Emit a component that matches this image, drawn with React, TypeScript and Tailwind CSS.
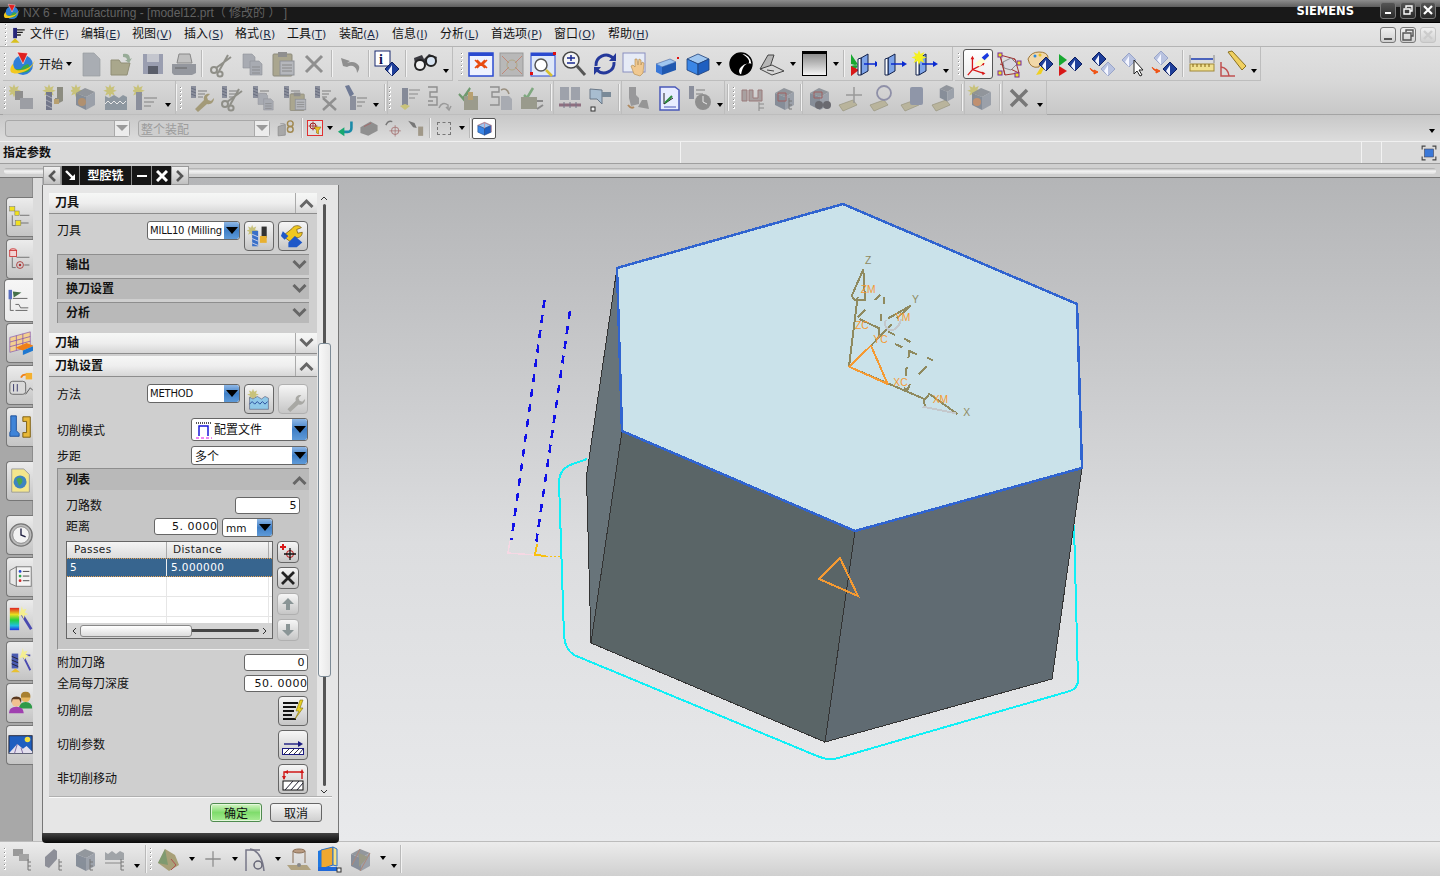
import React from "react";

const I = ({ s = 28, children }: { s?: number; children: React.ReactNode }) => (
  <svg width={s} height={s} viewBox="0 0 28 28" className="shrink-0">
    {children}
  </svg>
);

// ---- shared drawing bits ----
const Logo = () => (
  <>
    <circle cx="14" cy="15" r="10" fill="#2f7fd8" />
    <path d="M6 19q6 6 14 2q2-4-1-7q-5 1-7 5z" fill="#3aa84a" />
    <path d="M2 22C6 26 24 22 26 9c0 0-2 10-14 11C8 21 5 20 4 14 1 17 1 20 2 22z" fill="#f2c81e" />
    <path d="M8 2l11 1-5 11z" fill="#e02020" stroke="#fff" strokeWidth=".6" />
  </>
);
const Doc = ({ c = "#a9adb3" }: { c?: string }) => (
  <path d="M6 3h11l6 6v17H6z" fill={c} stroke="#9a9da2" strokeWidth=".7" />
);
const Mill = () => (
  <g>
    <rect x="4" y="2" width="5" height="12" fill="#8b8f9c" />
    <path d="M4 4l5 2M4 7l5 2M4 10l5 2" stroke="#6a6f80" />
    <path d="M11 7h9M11 10h7M11 13h5" stroke="#9b9b9b" strokeWidth="1.4" />
  </g>
);
const Spark = ({ x = 5, y = 5 }: { x?: number; y?: number }) => (
  <path
    d={`M${x} ${y - 5}l1.3 3.5 3.5-1.5-1.5 3.5 3.5 1.3-3.5 1.3 1.5 3.5-3.5-1.5-1.3 3.5-1.3-3.5-3.5 1.5 1.5-3.5-3.5-1.3 3.5-1.3-1.5-3.5 3.5 1.5z`}
    fill="#c8c27a"
  />
);
const Wrench = ({ c = "#a39a78" }: { c?: string }) => (
  <path d="M8 25l9-9c-1-4 2-7 6-6l-3 3 1 3 3 1 3-3c0 4-3 7-7 6l-9 8z" fill={c} />
);
const Scissors = ({ c = "#8f8f88" }: { c?: string }) => (
  <g fill="none" stroke={c} strokeWidth="2">
    <circle cx="7" cy="20" r="3" />
    <circle cx="13" cy="24" r="2.6" />
    <path d="M9 18L24 7M12 21L21 5" />
  </g>
);
const Pages = () => (
  <g fill="#a8abb2" stroke="#8f9298" strokeWidth=".6">
    <path d="M5 4h9l3 3v11H5z" />
    <path d="M12 11h9l3 3v11H12z" />
    <path d="M14 17h8M14 20h8M14 23h8" stroke="#777" />
  </g>
);
const Paste = () => (
  <g>
    <rect x="4" y="4" width="19" height="22" rx="1" fill="#aaa68f" stroke="#8d8b7c" />
    <rect x="9" y="2" width="9" height="5" fill="#8f8f8f" />
    <rect x="11" y="11" width="14" height="14" fill="#b5b7bc" stroke="#8f9298" />
    <path d="M13 15h10M13 18h10M13 21h10" stroke="#888" />
  </g>
);
const Cross = ({ c = "#8f8f8f", w = 3 }: { c?: string; w?: number }) => (
  <path d="M6 6l16 16M22 6L6 22" stroke={c} strokeWidth={w} />
);
const Box = ({ a = "#9fc6f0", b = "#3a86e6", c = "#1f5fc0" }: { a?: string; b?: string; c?: string }) => (
  <g stroke="#1d3f78" strokeWidth=".8">
    <path d="M3 9l11-5 11 5-11 5z" fill={a} />
    <path d="M3 9l11 5v11L3 20z" fill={b} />
    <path d="M25 9l-11 5v11l11-5z" fill={c} />
  </g>
);
const GrayBox = () => (
  <g opacity=".9">
    <path d="M5 9l9-5 10 4-9 5z" fill="#8a8f96" />
    <path d="M5 9l10 4v13L5 21z" fill="#7f8793" />
    <path d="M24 8l-9 5v13l9-5z" fill="#969ca6" />
  </g>
);
const Panel = ({ x = 10 }: { x?: number }) => (
  <g>
    <path d={`M${x} 8l7-4v17l-7 4z`} fill="#7ea4e8" stroke="#10204a" />
    <path d={`M${x} 8v17h-3V9z`} fill="#fff" stroke="#10204a" />
    <path d={`M${x + 3} 14h11`} stroke="#0a2ad0" strokeWidth="1.5" />
    <path d={`M${x + 14} 11l5 3-5 3z`} fill="#0a2ad0" />
  </g>
);
const Diamond = ({ x = 14, y = 14, dim = false }: { x?: number; y?: number; dim?: boolean }) => (
  <g>
    <path d={`M${x} ${y - 7}l7 7-7 7-7-7z`} fill={dim ? "#b8c2e0" : "#1f3f9a"} stroke={dim ? "#98a4c8" : "#0d1f60"} />
    <path d={`M${x} ${y - 4}v11l-4-5z`} fill="#f4f6ff" />
  </g>
);
const Tag = () => (
  <path d="M3 21l14-5 4 5-14 6z" fill="#b9b49c" stroke="#989580" strokeWidth=".7" />
);
const TreeMark = () => (
  <path d="M19 14v11M19 17h3M19 21h3M19 25h3" stroke="#777" fill="none" />
);
const Caret = ({ low = false, dim = false }: { low?: boolean; dim?: boolean }) => (
  <div className={`flex justify-center shrink-0 w-full ${low ? "pt-[14px]" : ""}`}>
    <div
      className={`w-0 h-0 border-l-[3px] border-r-[3px] border-t-[4px] border-l-transparent border-r-transparent ${dim ? "border-t-[#666]" : "border-t-black"}`}
    />
  </div>
);

const Ic = ({ children, w = "w-[31px]" }: { children: React.ReactNode; w?: string }) => (
  <div className={`${w} flex justify-center items-center shrink-0`}>{children}</div>
);
const Sep = ({ w = "w-[6px]" }: { w?: string }) => (
  <div className={`${w} self-stretch flex justify-center py-[3px] shrink-0`}>
    <div className="w-[2px] bg-[#f2f2f2] border-l border-[#b9b9b9]" />
  </div>
);
const Grip = ({ w = "w-[4px]" }: { w?: string }) => (
  <div className={`${w} flex flex-col gap-[2px] justify-center items-center shrink-0`}>
    {[0, 1, 2, 3, 4, 5].map((n) => (
      <div key={n} className="w-[2px] h-[2px] bg-[#8c8c8c] border-r border-b border-white" />
    ))}
  </div>
);
const Cw = ({ w, low }: { w: string; low?: boolean }) => (
  <div className={`${w} shrink-0`}>
    <Caret low={low} />
  </div>
);
const Tb = ({ w, children }: { w: string; children: React.ReactNode }) => (
  <div className={`${w} h-[34px] flex items-center shrink-0 border-r border-b border-[#bdbdbd]`}>{children}</div>
);

const menu: [string, string, string][] = [
  ["文件", "F", "w-[51px]"],
  ["编辑", "E", "w-[51px]"],
  ["视图", "V", "w-[52px]"],
  ["插入", "S", "w-[51px]"],
  ["格式", "R", "w-[52px]"],
  ["工具", "T", "w-[52px]"],
  ["装配", "A", "w-[53px]"],
  ["信息", "I", "w-[48px]"],
  ["分析", "L", "w-[51px]"],
  ["首选项", "P", "w-[63px]"],
  ["窗口", "O", "w-[54px]"],
  ["帮助", "H", "w-[51px]"],
];

const WinBtn = ({ children }: { children: React.ReactNode }) => (
  <div className="w-[16px] h-[17px] rounded-[3px] border border-[#777] bg-gradient-to-b from-[#555] to-[#2a2a2a] flex items-center justify-center text-white">
    {children}
  </div>
);
const MdiBtn = ({ children, dim }: { children: React.ReactNode; dim?: boolean }) => (
  <div
    className={`w-[16px] h-[16px] rounded-[3px] border flex items-center justify-center bg-gradient-to-b from-[#f0f0f0] to-[#d0d0d0] ${dim ? "border-[#c4c4c4]" : "border-[#777]"}`}
  >
    {children}
  </div>
);

// ---- dialog parts ----
const Chev = ({ up }: { up?: boolean }) => (
  <svg width="15" height="10" viewBox="0 0 15 10" className="shrink-0">
    <path d={up ? "M1.500 9l6-6 6 6" : "M1.500 1l6 6 6-6"} fill="none" stroke="#666" strokeWidth="3" />
  </svg>
);
const Head = ({ t, up }: { t: string; up?: boolean }) => (
  <div className="h-[21px] flex bg-gradient-to-b from-[#f6f7f6] via-[#eeeeee] to-[#d6d6d6] border-b border-[#8d8d8d] shrink-0">
    <div className="flex-1 pl-[6px] font-bold leading-[18px] text-[#111]">{t}</div>
    <div className="w-[22px] flex items-center justify-center border-l border-[#aaa]">
      <Chev up={up} />
    </div>
  </div>
);
const Sub = ({ t, up }: { t: string; up?: boolean }) => (
  <div className="h-[21px] mx-[8px] flex items-center justify-between bg-[#b9b9b9] border-t border-l border-[#8e8e8e] pl-[8px] pr-[2px] font-bold text-[#111] shrink-0">
    <span className="-mt-[2px]">{t}</span>
    <Chev up={up} />
  </div>
);
const Arrow = () => (
  <div className="w-[15px] self-stretch rounded-r-[2px] bg-gradient-to-b from-[#8fb8e6] via-[#3f7fc6] to-[#5e9ad8] flex items-center justify-center shrink-0">
    <div className="w-0 h-0 border-l-[6px] border-r-[6px] border-t-[7px] border-l-transparent border-r-transparent border-t-black" />
  </div>
);
const Combo = ({ w, h = "h-[19px]", children }: { w: string; h?: string; children: React.ReactNode }) => (
  <div className={`${w} ${h} flex bg-white border border-[#666] rounded-[3px] overflow-hidden shrink-0`}>
    <div className="flex-1 min-w-0 flex items-center pl-[2px] overflow-hidden whitespace-nowrap">{children}</div>
    <Arrow />
  </div>
);
const Input = ({ w, t, clip }: { w: string; t: string; clip?: boolean }) => (
  <div
    className={`${w} h-[17px] bg-white border border-[#666] rounded-[3px] flex justify-end pr-[2px] leading-[15px] font-['DejaVu_Sans',sans-serif] text-[11px] tracking-[.5px] overflow-hidden whitespace-nowrap shrink-0`}
  >
    <span className={`shrink-0 ${clip ? "-mr-[10px]" : ""}`}>{t}</span>
  </div>
);
const Btn = ({ children, s = "w-[30px] h-[30px]", dim }: { children: React.ReactNode; s?: string; dim?: boolean }) => (
  <div
    className={`${s} rounded-[4px] border flex items-center justify-center bg-gradient-to-b from-[#f6f6f6] to-[#c6c6c6] shrink-0 ${dim ? "border-[#b0b0b0]" : "border-[#666]"}`}
  >
    {children}
  </div>
);
const Row = ({ h, a = "items-center", children }: { h: string; a?: string; children: React.ReactNode }) => (
  <div className={`${h} ${a} flex shrink-0`}>{children}</div>
);

const tabs: React.ReactNode[] = [
  <I s={24} key="a">
    <rect x="2" y="2" width="6" height="5" fill="#f0e020" stroke="#776" strokeWidth=".6" />
    <rect x="8" y="7" width="5" height="5" fill="#f0e020" stroke="#776" strokeWidth=".6" />
    <path d="M14 12h11M5 12v12h4M15 21h9" stroke="#666" fill="none" />
    <rect x="9" y="18" width="6" height="6" fill="#f0e020" stroke="#776" strokeWidth=".6" />
  </I>,
  <I s={24} key="b">
    <ellipse cx="6" cy="4" rx="4" ry="2" fill="#f2c8c8" stroke="#c33" />
    <rect x="2" y="4" width="8" height="7" fill="#f2d4d4" stroke="#c33" />
    <path d="M10 12h15M5 12v12h4M19 21h6" stroke="#666" fill="none" />
    <circle cx="14" cy="21" r="4" fill="none" stroke="#a33" />
    <circle cx="14" cy="21" r="1.5" fill="#a33" />
  </I>,
  <I s={24} key="c">
    <rect x="3" y="1" width="4" height="11" fill="#5a70c0" />
    <path d="M8 3l10 1-9 6" fill="#44704a" />
    <path d="M8 11h17M5 12v13h4M11 18h4l2 4h9" stroke="#555" fill="none" />
    <path d="M11 25h14" stroke="#555" />
  </I>,
  <I s={26} key="d">
    <path d="M2 8l22-6v16L2 24z" fill="#f4d090" stroke="#8050b0" strokeWidth=".7" />
    <path d="M2 13l22-6M2 18l22-6M9 6v16M16 4v16" stroke="#8050b0" strokeWidth=".8" />
    <path d="M8 19l12-5 8 3-12 5z" fill="#f08018" />
    <path d="M16 22l12-5v5l-12 5z" fill="#1f78d0" />
  </I>,
  <I s={26} key="e">
    <rect x="2" y="10" width="17" height="14" rx="3" fill="#d9d9d9" stroke="#666" />
    <path d="M6 13v8M10 13v8" stroke="#336" />
    <path d="M14 6q2-4 6-3" stroke="#f08018" strokeWidth="2" fill="none" />
    <rect x="19" y="1" width="7" height="7" fill="#f4b030" />
    <path d="M19 24l5-7 3 3" stroke="#555" fill="none" />
  </I>,
  <I s={26} key="f">
    <path d="M3 2h6v16l3 3v3H2v-4l1-2z" fill="#3f84d8" stroke="#1d4f98" />
    <path d="M16 3h8v22h-8v-5h4V8h-4z" fill="#e8b838" stroke="#7a5c10" />
  </I>,
  <I s={26} key="g">
    <path d="M4 1h13l6 6v19H4z" fill="#f4e68c" stroke="#999" />
    <circle cx="13" cy="15" r="7" fill="#3f84c0" />
    <path d="M9 12q4-3 6 0t-3 7z" fill="#4ca84c" />
  </I>,
  <I s={26} key="h">
    <circle cx="14" cy="14" r="12" fill="#bbb" stroke="#777" strokeWidth="1.5" />
    <circle cx="14" cy="14" r="9" fill="#f2f2f2" stroke="#888" />
    <path d="M14 7v7l5 2" stroke="#224" strokeWidth="1.5" fill="none" />
  </I>,
  <I s={26} key="i">
    <path d="M2 7l7-4v21l-7-3z" fill="#e8e8e8" stroke="#777" />
    <rect x="9" y="3" width="16" height="21" fill="#f4f4f4" stroke="#777" />
    <circle cx="13" cy="8" r="1.5" fill="#2a4ad0" />
    <circle cx="13" cy="13" r="1.5" fill="#2aa84a" />
    <circle cx="13" cy="18" r="1.5" fill="#d02a2a" />
    <path d="M16 8h7M16 13h7M16 18h7" stroke="#444" />
  </I>,
  <I s={26} key="j">
    <defs>
      <linearGradient id="rb" x1="0" y1="0" x2="0" y2="1">
        <stop offset="0" stopColor="#e02020" />
        <stop offset=".3" stopColor="#e8e020" />
        <stop offset=".55" stopColor="#20d040" />
        <stop offset=".8" stopColor="#20c0e0" />
        <stop offset="1" stopColor="#2030e0" />
      </linearGradient>
    </defs>
    <rect x="2" y="2" width="10" height="24" fill="url(#rb)" />
    <path d="M15 9l10 16" stroke="#4a4ab0" strokeWidth="3" />
    <path d="M15 0l1 4 4-1-2 4 4 2-4 1-1 4-2-4-4 1 2-4z" fill="#f4ee90" />
  </I>,
  <I s={26} key="k">
    <rect x="4" y="6" width="7" height="16" fill="#4a5ab0" />
    <path d="M4 9l7 3M4 13l7 3M4 17l7 3" stroke="#223" />
    <path d="M14 8h10M16 8l8 16" stroke="#4a4ab0" strokeWidth="2" fill="none" />
    <path d="M16 0l1 4 4-1-2 4 4 2-4 1-1 3-2-3-4 1 2-4z" fill="#f4ee90" />
    <path d="M3 26l5-4 5 4z" fill="#e8c030" />
  </I>,
  <I s={26} key="l">
    <circle cx="19" cy="8" r="5" fill="#e8b860" />
    <path d="M19 2q6 0 5 6h-10q-1-6 5-6z" fill="#a88030" />
    <path d="M12 20q0-7 7-7t7 7z" fill="#2f9a48" />
    <circle cx="9" cy="13" r="5" fill="#f0c090" />
    <path d="M9 7q7 0 5 7l-2-4H5l-1 4q-2-7 5-7z" fill="#5a3a20" />
    <path d="M1 25q0-7 8-7t8 7z" fill="#a040b0" />
  </I>,
  <I s={26} key="m">
    <rect x="1" y="4" width="25" height="19" fill="#1f5fc0" stroke="#223" />
    <circle cx="21" cy="8" r="3" fill="#f4e040" />
    <path d="M1 23l9-10 6 5 4-3 6 6v2z" fill="#e4e0ee" />
    <path d="M10 13l-3 10M14 17l2 6" stroke="#7a68a0" />
  </I>,
];

const tabClass = (n: number) => {
  if (n === 2) return "w-[29px] h-[43px] ml-[4px] -mt-[2px] mb-[1px] from-[#f6f6f6] to-[#ebebeb]";
  if (n === 5) return "w-[27px] h-[40px] ml-[6px] mb-[14px] from-[#ececec] to-[#c4c4c4]";
  if (n === 6) return "w-[27px] h-[40px] ml-[6px] mb-[14px] from-[#ececec] to-[#c4c4c4]";
  return "w-[27px] h-[40px] ml-[6px] mb-[2px] from-[#ececec] to-[#c4c4c4]";
};

// ---- 3D part ----
const Wcs = () => (
  <g transform="translate(800 240) scale(.3333)" fill="none" strokeLinejoin="round">
    <g stroke="#8f8a5f" strokeWidth="6">
      <path d="M147 380L173 170M190 88L155 168l10 12h30l-5-92" />
      <path d="M147 380L375 478M375 478l13-16 84 60M375 498l-5-20" />
      <path d="M213 317L275 252M265 235l65-37-40 38" />
      <path d="M173 232L195 210M178 237l60 28v25M225 180l15-16M252 170v22M243 222v20" />
      <path d="M265 275l20 10M285 312l22 10M313 296l18 10M325 355l3-22 22 10M382 352l16 10M356 404l24-24M320 382l-3 25M312 445l10 5 8-18" />
    </g>
    <path d="M258 240a20 20 0 0 0 22 30q15-5 24-32" stroke="#c4c8cc" strokeWidth="6" />
    <path d="M368 500l100 20" stroke="#c4c8cc" strokeWidth="6" />
    <path d="M147 380L213 317L263 432Z" stroke="#f59a32" strokeWidth="6" />
    <g fontFamily="'Liberation Sans',sans-serif" fontSize="31">
      <text x="195" y="72" fill="#8f8a5f" stroke="none">Z</text>
      <text x="336" y="188" fill="#8f8a5f" stroke="none">Y</text>
      <text x="490" y="528" fill="#8f8a5f" stroke="none">X</text>
      <text x="182" y="160" fill="#f59a32" stroke="none">ZM</text>
      <text x="165" y="266" fill="#f59a32" stroke="none">ZC</text>
      <text x="220" y="308" fill="#f59a32" stroke="none">YC</text>
      <text x="285" y="243" fill="#f59a32" stroke="none">YM</text>
      <text x="280" y="439" fill="#f59a32" stroke="none">XC</text>
      <text x="398" y="490" fill="#f59a32" stroke="none">XM</text>
    </g>
  </g>
);

const Scene = () => (
  <svg viewBox="42 178 1398 663" className="w-full h-full" shapeRendering="crispEdges">
    <path
      d="M587 459L570 465Q559 470 559 482L564 636Q565 649 574 655L817 756Q828 761 838 758L1070 691Q1078 688 1078 680L1074 525"
      fill="none"
      stroke="#10f0f6"
      strokeWidth="2"
    />
    <path d="M544.5 300L511.4 540" fill="none" stroke="#1010e8" strokeWidth="2.500" strokeDasharray="8 7" />
    <path d="M570 311L536 544" fill="none" stroke="#1010e8" strokeWidth="2.500" strokeDasharray="8 7" />
    <path d="M510 541L508 553L535 555" fill="none" stroke="#f6d8e4" strokeWidth="1.500" />
    <path d="M537 544L535 555L546 556" fill="none" stroke="#f8c010" strokeWidth="2" />
    <path d="M546 556L562 557" fill="none" stroke="#f8c010" strokeWidth="1" strokeDasharray="2 2" />
    <path d="M617 268L622 431L591 643L586.500 476Z" fill="#68747a" stroke="#333" strokeWidth="1" />
    <path d="M622 431L855 531L825 742L591 643Z" fill="#5a6567" stroke="#333" strokeWidth="1" />
    <path d="M855 531L1082 468L1052 679L825 742Z" fill="#606b72" stroke="#333" strokeWidth="1" />
    <path d="M617 268L843 204L1077 304L1082 468L855 531L622 431Z" fill="#cae2ea" stroke="#3064d0" strokeWidth="2.500" />
    <Wcs />
    <path d="M840 558L819 579L858 596Z" fill="none" stroke="#f59a32" strokeWidth="2" />
  </svg>
);

export default function App() {
  return (
    <div className="relative w-[1440px] h-[876px] flex flex-col overflow-hidden bg-[#d8d8d8] text-[12px] text-[#111] font-['Noto_Sans_CJK_SC','DejaVu_Sans',sans-serif]">
      {/* title bar */}
      <div className="h-[23px] shrink-0 flex flex-col relative">
        <div className="h-[7px] bg-gradient-to-b from-[#8e8e8e] to-[#5e5e5e]" />
        <div className="flex-1 bg-[#191919] border-b border-black" />
        <div className="absolute inset-0 flex items-center pl-[3px]">
          <I s={18}>
            <Logo />
          </I>
          <span className="ml-[2px] mt-[3px] text-[12px] text-[#626262] font-['Liberation_Sans','Noto_Sans_CJK_SC',sans-serif] whitespace-nowrap">
            NX 6 - Manufacturing - [model12.prt（ 修改的 ） ]
          </span>
          <span className="ml-auto mt-[1px] mr-[26px] font-['DejaVu_Sans',sans-serif] font-bold text-[11.5px] text-white">
            SIEMENS
          </span>
          <div className="flex gap-[4px] pr-[4px] -mt-[3px]">
            <WinBtn>
              <div className="w-[6px] h-[2px] bg-white mt-[5px]" />
            </WinBtn>
            <WinBtn>
              <svg width="10" height="10" viewBox="0 0 10 10" fill="none" stroke="#fff" strokeWidth="1.4">
                <path d="M3 3V1h6v5H7M1 4h6v5H1z" />
              </svg>
            </WinBtn>
            <WinBtn>
              <svg width="10" height="10" viewBox="0 0 10 10" stroke="#fff" strokeWidth="2.2">
                <path d="M1 1l8 8M9 1l-8 8" />
              </svg>
            </WinBtn>
          </div>
        </div>
      </div>

      {/* menu */}
      <div className="h-[24px] shrink-0 flex items-center bg-gradient-to-b from-[#e6e6e6] to-[#dedede] border-b border-[#b4b4b4] pl-[4px]">
        <Grip />
        <I s={18}>
          <rect x="8" y="3" width="6" height="16" fill="#26267a" />
          <path d="M14 6h12M14 10h9M14 14h6" stroke="#222" strokeWidth="2" />
          <path d="M4 26l7-7 7 7z" fill="#d8c020" />
        </I>
        <div className="flex ml-[4px] -mt-[2px]">
          {menu.map(([t, k, w]) => (
            <span key={k} className={`whitespace-nowrap leading-none shrink-0 ${w}`}>
              {t}
              <span className="text-[11px] text-[#1c2c4a] font-['DejaVu_Sans',sans-serif]">
                (<span className="underline">{k}</span>)
              </span>
            </span>
          ))}
        </div>
        <div className="ml-auto flex gap-[4px] pr-[4px]">
          <MdiBtn>
            <div className="w-[8px] h-[2px] bg-[#555] mt-[8px]" />
          </MdiBtn>
          <MdiBtn>
            <svg width="12" height="12" viewBox="0 0 12 12" fill="none" stroke="#555" strokeWidth="1.4">
              <path d="M4 3V1h7v6H9M1 4h8v7H1z" />
            </svg>
          </MdiBtn>
          <MdiBtn dim>
            <svg width="10" height="10" viewBox="0 0 10 10" stroke="#ccc" strokeWidth="2.4">
              <path d="M1 1l8 8M9 1l-8 8" />
            </svg>
          </MdiBtn>
        </div>
      </div>

      {/* toolbar row 1 */}
      <div className="h-[34px] shrink-0 flex bg-gradient-to-b from-[#e0e0e0] to-[#d8d8d8] pl-[3px]">
        <Tb w="w-[450px]">
          <Grip />
          <Ic>
            <I>
              <Logo />
            </I>
          </Ic>
          <div className="w-[37px] flex items-center gap-[3px] shrink-0 pl-[1px]">
            <span>开始</span>
            <div className="w-0 h-0 border-l-[3px] border-r-[3px] border-t-[4px] border-l-transparent border-r-transparent border-t-black" />
          </div>
          <Ic>
            <I>
              <Doc />
            </I>
          </Ic>
          <Ic>
            <I>
              <path d="M3 10h8l2 3h9l-3 12H3z" fill="#a9a78c" stroke="#918f76" />
              <path d="M15 4q7-1 7 5l2-1-3 5-4-3h2q0-3-4-3z" fill="#98ac98" />
            </I>
          </Ic>
          <Ic>
            <I>
              <rect x="4" y="4" width="20" height="20" fill="#9a9eb0" />
              <rect x="8" y="4" width="12" height="8" fill="#c4c6ce" />
              <rect x="9" y="16" width="10" height="8" fill="#5a5e6a" />
            </I>
          </Ic>
          <Ic>
            <I>
              <path d="M9 4h11l2 9H7z" fill="#c0c0c0" stroke="#888" />
              <path d="M2 14h24v9l-4 2H4l-2-2z" fill="#94979e" />
              <path d="M5 18h12" stroke="#666" />
            </I>
          </Ic>
          <Sep />
          <Ic>
            <I>
              <Scissors />
            </I>
          </Ic>
          <Ic>
            <I>
              <Pages />
            </I>
          </Ic>
          <Ic>
            <I>
              <Paste />
            </I>
          </Ic>
          <Ic>
            <I>
              <Cross />
            </I>
          </Ic>
          <Sep />
          <Ic>
            <I>
              <path d="M6 16l-2-8 9 3-3 2q8-3 12 3 1 3-2 7 0-5-4-7-3-1-6 1z" fill="#8f8f8f" />
            </I>
          </Ic>
          <Sep />
          <Ic>
            <I>
              <rect x="1" y="1" width="15" height="15" fill="#fff" stroke="#1a2a70" />
              <text x="5" y="14" fontSize="14" fontWeight="bold" fontFamily="'Liberation Serif',serif" fill="#101050">
                i
              </text>
              <Diamond x={18} y={19} />
            </I>
          </Ic>
          <Sep />
          <Ic>
            <I>
              <path d="M3 8l8-3 2 4 5-5 8 3-2 6-8 2-2-2-3 2-6 5z" fill="#3a3a40" />
              <circle cx="9" cy="15" r="5" fill="#f2f2f2" stroke="#222" strokeWidth="2" />
              <circle cx="20" cy="11" r="5" fill="#d8e4f2" stroke="#222" strokeWidth="2" />
            </I>
          </Ic>
          <Cw w="w-[12px]" low />
        </Tb>
        <div className="w-[5px] shrink-0" />
        <Tb w="w-[495px]">
          <Grip w="w-[7px]" />
          <Ic>
            <I>
              <rect x="2" y="3" width="24" height="23" fill="#eef2ff" stroke="#2a4ad0" strokeWidth="1.500" />
              <rect x="2" y="3" width="24" height="3" fill="#2a4ad0" />
              <path d="M8 10l4 4-4 4M20 10l-4 4 4 4M10 10l8 8M18 10l-8 8" stroke="#e84a10" strokeWidth="1.600" fill="none" />
            </I>
          </Ic>
          <Ic>
            <I>
              <rect x="2" y="3" width="23" height="23" fill="#b8b8b8" stroke="#999" />
              <path d="M4 6l7 7M24 6l-7 7M4 24l7-7M24 24l-7-7" stroke="#c08878" />
              <circle cx="14" cy="15" r="5" fill="none" stroke="#b0a888" />
            </I>
          </Ic>
          <Ic>
            <I>
              <rect x="2" y="3" width="24" height="23" fill="#dfe8f8" stroke="#2a4ad0" />
              <rect x="2" y="3" width="24" height="3" fill="#2a4ad0" />
              <circle cx="12" cy="15" r="6" fill="#fff" stroke="#555" strokeWidth="1.500" />
              <path d="M17 20l6 6" stroke="#d8c030" strokeWidth="2.500" />
              <rect x="1" y="22" width="3" height="3" fill="#e01010" />
              <rect x="24" y="2" width="3" height="3" fill="#e01010" />
            </I>
          </Ic>
          <Ic>
            <I>
              <circle cx="11" cy="10" r="8" fill="#f4f4f4" stroke="#444" strokeWidth="1.500" />
              <path d="M7 8h8M11 5v6M7 13h8" stroke="#1a2a90" strokeWidth="1.500" />
              <path d="M17 16l8 9" stroke="#555" strokeWidth="3" />
            </I>
          </Ic>
          <Ic>
            <I>
              <path d="M5 16a10 10 0 0 1 17-8" fill="none" stroke="#24389a" strokeWidth="3" />
              <path d="M23 12a10 10 0 0 1-17 8" fill="none" stroke="#24389a" strokeWidth="3" />
              <path d="M25 3v8h-7zM3 25v-8h7z" fill="#24389a" />
            </I>
          </Ic>
          <Ic>
            <I>
              <rect x="1" y="3" width="22" height="19" fill="#e6ebf6" stroke="#8a8fc0" />
              <path d="M12 24l-3-8 2-1 2 2V9l2 0 1 6 1-6 2 1v5l1-3 2 1-1 10-3 3z" fill="#f0c890" stroke="#b08848" strokeWidth=".6" />
            </I>
          </Ic>
          <Ic>
            <I>
              <path d="M3 14l14-5 6 3-14 5z" fill="#9fc6f0" stroke="#2a4a90" strokeWidth=".5" />
              <path d="M3 14l6 3v8l-6-3z" fill="#3a78d8" />
              <path d="M9 17l14-5v8L9 25z" fill="#1f58b0" />
              <rect x="24" y="7" width="2" height="2" fill="#e01010" />
            </I>
          </Ic>
          <Ic>
            <I>
              <Box />
            </I>
          </Ic>
          <Cw w="w-[12px]" />
          <Ic>
            <I>
              <circle cx="14" cy="14" r="11" fill="#fff" stroke="#000" strokeWidth="1.400" />
              <path d="M14 3a11 11 0 0 0 0 22q-4-4 0-8t7-3q4-4-7-11z" fill="#000" />
              <path d="M14 25a11 11 0 0 0 11-11q-4-2-7 1t-4 10z" fill="#000" />
            </I>
          </Ic>
          <Ic>
            <I>
              <path d="M2 19l8-14h6l-4 12z" fill="#b6b6b6" stroke="#444" />
              <path d="M2 19l12-4 12 6-12 4z" fill="#d6d6d6" stroke="#444" />
              <path d="M9 20l7 1" stroke="#444" />
            </I>
          </Ic>
          <Cw w="w-[12px]" />
          <Ic>
            <div className="w-[25px] h-[25px] border border-black border-t-[3px] bg-gradient-to-b from-[#8e8e8e] to-[#f4f4f4]" />
          </Ic>
          <Cw w="w-[11px]" />
          <Sep />
          <Ic>
            <I>
              <path d="M2 4v10l8 2zM2 26V16l8-2z" fill="#18a830" />
              <path d="M2 16v10l8-6z" fill="#d81818" />
              <Panel x={12} />
            </I>
          </Ic>
          <Ic>
            <I>
              <Panel x={8} />
            </I>
          </Ic>
          <Ic>
            <I>
              <Panel x={8} />
              <path d="M8 0l1.500 4 4-2-2 4 4 1.500-4 1.500 2 4-4-2-1.500 4-1.500-4-4 2 2-4-4-1.500 4-1.500-2-4 4 2z" fill="#f4f020" />
            </I>
          </Ic>
          <Cw w="w-[11px]" low />
        </Tb>
        <div className="w-[2px] shrink-0" />
        <Tb w="w-[306px]">
          <Grip w="w-[7px]" />
          <Ic>
            <div className="w-[30px] h-[30px] rounded-[3px] border border-[#555] bg-gradient-to-b from-white to-[#ececec] flex items-center justify-center">
              <I s={26}>
                <path d="M8 8v12l12 4M8 20L3 26M8 20l12-6" stroke="#d81818" strokeWidth="1.400" fill="none" />
                <path d="M6 9l2-4 2 4zM18 22l4 2-3 2zM18 13l3 0-1 3z" fill="#d81818" />
                <path d="M10 14L24 3l2 3-10 11z" fill="#fdfdd0" />
                <path d="M18 7l6-5 2 3-5 5z" fill="#1a3ae0" />
              </I>
            </div>
          </Ic>
          <Ic>
            <I>
              <path d="M5 5l15 4 4 14-14 2zM5 5l5 20M5 14l19 9M20 9l-10 8" stroke="#a23030" fill="none" />
              <path d="M8 12l8-4 6 6-6 6-7-2z" fill="#d8d8e0" stroke="#555" strokeWidth=".6" />
              <g fill="#f0e020" stroke="#7a2a9a">
                <rect x="3" y="3" width="4" height="4" />
                <rect x="22" y="11" width="4" height="4" />
                <rect x="3" y="21" width="4" height="4" />
                <rect x="20" y="23" width="4" height="4" />
              </g>
            </I>
          </Ic>
          <Ic>
            <I>
              <path d="M2 9q3-7 11-7t9 5q0 5-5 5l-3 1-1 4q-9 2-11-8z" fill="#f2d8a8" stroke="#a07838" />
              <circle cx="9" cy="6" r="1.500" fill="#2a8ae0" />
              <circle cx="14" cy="5" r="1.500" fill="#e8c020" />
              <path d="M10 25l5-8 3-5 4 5-5 3-2 4z" fill="#f0d020" />
              <Diamond x={20} y={14} />
            </I>
          </Ic>
          <Ic>
            <I>
              <path d="M2 4l8 6-8 6z" fill="#18a830" />
              <path d="M2 16l8 5-8 5z" fill="#d81818" />
              <Diamond x={18} y={14} />
            </I>
          </Ic>
          <Ic>
            <I>
              <Diamond x={11} y={9} />
              <Diamond x={20} y={19} dim />
              <path d="M2 18q1 4 6 4M6 20l4 2-4 2z" fill="#f05010" stroke="#f05010" />
            </I>
          </Ic>
          <Ic>
            <I>
              <Diamond x={10} y={10} dim />
              <path d="M15 10v14l3-3 3 5 2-1-3-5h4z" fill="#fff" stroke="#222" />
            </I>
          </Ic>
          <Ic>
            <I>
              <Diamond x={11} y={8} dim />
              <Diamond x={20} y={19} />
              <path d="M2 17q1 4 6 4M6 19l4 2-4 2z" fill="#f05010" stroke="#f05010" />
            </I>
          </Ic>
          <Sep w="w-[7px]" />
          <Ic>
            <I>
              <path d="M3 9h22" stroke="#1a3ab0" strokeWidth="1.500" />
              <path d="M2 5v8M26 5v8" stroke="#888" />
              <rect x="2" y="14" width="24" height="7" fill="#f0e090" stroke="#a08838" />
              <path d="M5 14v3M9 14v3M13 14v3M17 14v3M21 14v3" stroke="#806010" />
            </I>
          </Ic>
          <Ic>
            <I>
              <path d="M2 12v14h14" fill="none" stroke="#c05050" strokeWidth="1.500" />
              <path d="M2 17q7 1 8 9" fill="none" stroke="#c05050" strokeWidth="1.500" />
              <path d="M9 2l4-1 14 15-4 4z" fill="#f0d060" stroke="#8a7020" />
            </I>
          </Ic>
          <Cw w="w-[12px]" low />
        </Tb>
      </div>

      {/* toolbar row 2 */}
      <div className="h-[34px] shrink-0 flex bg-gradient-to-b from-[#d8d8d8] to-[#c8c8c8] pl-[3px] border-b border-[#a4a4a4]">
        <Tb w="w-[173px]">
          <Grip />
          <Ic>
            <I>
              <Spark />
              <rect x="6" y="7" width="8" height="9" fill="#8e8e8e" />
              <rect x="11" y="14" width="13" height="11" fill="#9c9ea4" />
            </I>
          </Ic>
          <Ic>
            <I>
              <Spark x={9} />
              <rect x="6" y="8" width="6" height="18" fill="#73778a" />
              <path d="M6 11l6 3M6 16l6 3M6 21l6 3" stroke="#a9abb6" />
              <path d="M17 3h6v14l-6 3h-2v-6h2z" fill="#8c8c80" />
              <rect x="14" y="15" width="5" height="5" fill="#b8a070" />
            </I>
          </Ic>
          <Ic>
            <I>
              <Spark />
              <GrayBox />
              <circle cx="11" cy="18" r="4" fill="#b09070" />
            </I>
          </Ic>
          <Ic>
            <I>
              <Spark x={8} />
              <path d="M3 12l4 2 5-3 5 3 4-3 4 2v13H3z" fill="#8d97a0" />
              <path d="M3 20l3-3 3 3 3-3 3 3 3-3 3 3 3-3" stroke="#e8e8e8" fill="none" />
            </I>
          </Ic>
          <Ic>
            <I>
              <Spark />
              <rect x="3" y="8" width="6" height="18" fill="#8b8f9c" />
              <path d="M11 14h13M11 18h10M11 22h7" stroke="#9b9b9b" strokeWidth="1.400" />
            </I>
          </Ic>
          <Cw w="w-[12px]" low />
          <Sep w="w-[4px]" />
        </Tb>
        <Tb w="w-[212px]">
          <Grip w="w-[9px]" />
          <Ic>
            <I>
              <Mill />
              <Wrench />
            </I>
          </Ic>
          <Ic>
            <I>
              <Mill />
              <Scissors />
            </I>
          </Ic>
          <Ic>
            <I>
              <Mill />
              <g transform="translate(5 6) scale(.8)">
                <Pages />
              </g>
            </I>
          </Ic>
          <Ic>
            <I>
              <Mill />
              <g transform="translate(7 7) scale(.75)">
                <Paste />
              </g>
            </I>
          </Ic>
          <Ic>
            <I>
              <Mill />
              <path d="M12 14l13 12M25 14L12 26" stroke="#8f8f8f" strokeWidth="2.400" />
            </I>
          </Ic>
          <Ic>
            <I>
              <path d="M3 2l4-1 5 9-4 3z" fill="#6f7a95" />
              <rect x="8" y="12" width="6" height="14" fill="#8b8f9c" />
              <path d="M15 14h10M15 18h8M15 22h5" stroke="#9b9b9b" strokeWidth="1.400" />
            </I>
          </Ic>
          <Cw w="w-[10px]" low />
          <Sep w="w-[7px]" />
        </Tb>
        <Tb w="w-[166px]">
          <Grip />
          <Ic>
            <I>
              <rect x="8" y="4" width="6" height="17" fill="#858a98" />
              <path d="M15 6h11M15 10h9M15 14h6" stroke="#a3a3a3" strokeWidth="1.400" />
              <path d="M11 26l-5-4 5-2 5 2z" fill="#c8c27a" />
            </I>
          </Ic>
          <Ic>
            <I>
              <path d="M3 3h9v5H5v5h7v8H3M3 17h5" fill="none" stroke="#8f8f8f" strokeWidth="1.400" />
              <path d="M14 24q3-7 9-3v4M21 23l3 3 2-4" fill="none" stroke="#9a9a9a" strokeWidth="1.500" />
            </I>
          </Ic>
          <Ic>
            <I>
              <path d="M3 10l4 4 7-10-6 12z" fill="#7fa87f" stroke="#6f9a6f" strokeWidth="2" />
              <rect x="8" y="12" width="14" height="14" fill="#9b9b8c" />
              <rect x="12" y="8" width="5" height="8" fill="#b8a070" />
            </I>
          </Ic>
          <Ic>
            <I>
              <path d="M3 3h9v5H5v5h7v8H3" fill="none" stroke="#8f8f8f" strokeWidth="1.400" />
              <path d="M14 12h8l3 3v11H14z" fill="#a8abb2" />
              <path d="M14 6q6-3 8 4" stroke="#9a9080" fill="none" strokeWidth="1.500" />
            </I>
          </Ic>
          <Ic>
            <I>
              <path d="M6 11l3 3 6-10" fill="none" stroke="#7fa87f" strokeWidth="2.500" />
              <rect x="3" y="13" width="16" height="12" fill="#999a8c" />
              <path d="M19 17h6M19 25l6-4" stroke="#8a8a8a" strokeWidth="2" />
            </I>
          </Ic>
          <Sep w="w-[7px]" />
        </Tb>
        <Tb w="w-[68px]">
          <Ic>
            <I>
              <rect x="4" y="3" width="9" height="13" fill="#9ea2ab" />
              <rect x="15" y="3" width="9" height="13" fill="#9ea2ab" />
              <path d="M3 21h22" stroke="#8f6f80" strokeWidth="3" />
              <path d="M8 18v6M14 18v6M20 18v6" stroke="#778" />
            </I>
          </Ic>
          <Ic>
            <I>
              <path d="M3 5l12 1v14l-5-5H3z" fill="#a8bdd0" stroke="#6a7888" />
              <path d="M15 8h9v5h-9z" fill="#7a8a98" />
              <rect x="4" y="23" width="4" height="4" fill="#eee" stroke="#333" />
            </I>
          </Ic>
          <Sep />
        </Tb>
        <Tb w="w-[103px]">
          <Ic>
            <I>
              <path d="M5 3h7v8l3 3v6l-8 2-2-8z" fill="#98989a" />
              <path d="M4 21q3 4 6 2" stroke="#b08a60" strokeWidth="2" fill="none" />
              <path d="M14 23l4-7h5l2 9z" fill="#959595" />
            </I>
          </Ic>
          <Ic>
            <I>
              <path d="M5 3h15l4 3v20H5z" fill="#e8ecff" stroke="#4a58b8" strokeWidth="1.500" />
              <path d="M9 20V9M9 20l9-6" stroke="#222" />
              <path d="M9 23h12" stroke="#4a58b8" />
              <path d="M10 19l7-7" stroke="#2a8a3a" strokeWidth="2" />
            </I>
          </Ic>
          <Ic>
            <I>
              <rect x="3" y="2" width="5" height="13" fill="#8b8f9c" />
              <path d="M10 6h9M10 10h7" stroke="#9b9b9b" strokeWidth="1.400" />
              <circle cx="17" cy="18" r="8" fill="#8e8e8e" />
              <path d="M17 12v6l4 2" stroke="#e8e8e8" fill="none" />
            </I>
          </Ic>
          <Cw w="w-[10px]" low />
        </Tb>
        <Tb w="w-[78px]">
          <Sep />
          <Grip w="w-[6px]" />
          <Ic>
            <I>
              <path d="M3 6h5v11H3zM10 6h4v8h5V6h4v11H10z" fill="#a8a0a0" stroke="#9a7a7a" />
              <path d="M20 18v9M20 20h5M20 24h5" stroke="#8a8a8a" fill="none" />
            </I>
          </Ic>
          <Ic>
            <I>
              <GrayBox />
              <path d="M8 9h8v8H8z" fill="none" stroke="#a06060" />
              <TreeMark />
            </I>
          </Ic>
          <Sep w="w-[4px]" />
        </Tb>
        <Tb w="w-[162px]">
          <Ic>
            <I>
              <GrayBox />
              <path d="M9 8h8v6H9z" fill="none" stroke="#a06060" />
              <circle cx="14" cy="21" r="4" fill="#6a6a70" />
              <circle cx="22" cy="21" r="4" fill="#6a6a70" />
            </I>
          </Ic>
          <Ic>
            <I>
              <Tag />
              <path d="M18 3v16M10 11h16" stroke="#999" strokeWidth="1.500" />
            </I>
          </Ic>
          <Ic>
            <I>
              <Tag />
              <circle cx="17" cy="9" r="7" fill="none" stroke="#8f90a8" strokeWidth="1.800" />
            </I>
          </Ic>
          <Ic>
            <I>
              <Tag />
              <rect x="12" y="3" width="13" height="18" rx="2" fill="#8f96a8" />
            </I>
          </Ic>
          <Ic>
            <I>
              <Tag />
              <g transform="translate(7 -2) scale(.75)">
                <GrayBox />
              </g>
            </I>
          </Ic>
          <Sep w="w-[7px]" />
        </Tb>
        <Tb w="w-[38px]">
          <Ic>
            <I>
              <Spark x={7} />
              <GrayBox />
              <circle cx="10" cy="18" r="4" fill="#c09070" />
            </I>
          </Ic>
          <Sep w="w-[7px]" />
        </Tb>
        <Tb w="w-[44px]">
          <Ic>
            <I>
              <Cross c="#777" w={3.500} />
            </I>
          </Ic>
          <Cw w="w-[12px]" low />
        </Tb>
      </div>

      {/* toolbar row 3 */}
      <div className="h-[27px] shrink-0 flex items-center bg-gradient-to-b from-[#c8c8c8] to-[#dcdcdc] border-b border-[#f0f0f0] pl-[5px] pr-[5px]">
        <div className="w-[125px] h-[17px] rounded-[3px] border border-[#a8a8a8] bg-[#cecece] flex justify-end shrink-0">
          <div className="w-[15px] bg-[#ececec] border-l border-[#aaa] flex items-center justify-center">
            <div className="w-0 h-0 border-l-[6px] border-r-[6px] border-t-[6px] border-l-transparent border-r-transparent border-t-[#9a9a9a]" />
          </div>
        </div>
        <div className="w-[132px] h-[17px] ml-[8px] rounded-[3px] border border-[#a8a8a8] bg-[#cecece] flex justify-between shrink-0">
          <span className="text-[#9c9c9c] pl-[2px] leading-[15px]">整个装配</span>
          <div className="w-[15px] bg-[#ececec] border-l border-[#aaa] flex items-center justify-center">
            <div className="w-0 h-0 border-l-[6px] border-r-[6px] border-t-[6px] border-l-transparent border-r-transparent border-t-[#9a9a9a]" />
          </div>
        </div>
        <Ic w="w-[31px]">
          <I s={20}>
            <path d="M3 12l10-3v15L3 25zM6 8h6" fill="#a8a8a8" stroke="#888" />
            <circle cx="20" cy="8" r="4" fill="none" stroke="#a08850" strokeWidth="2" />
            <circle cx="20" cy="16" r="4" fill="none" stroke="#a08850" strokeWidth="2" />
          </I>
        </Ic>
        <Sep w="w-[2px]" />
        <Ic w="w-[24px]">
          <div className="w-[16px] h-[16px] border border-[#e03030] bg-[#e0e0e0] flex items-end justify-end">
            <I s={14}>
              <circle cx="10" cy="10" r="6" fill="none" stroke="#a02020" strokeWidth="2" />
              <path d="M10 1v18M1 10h18" stroke="#a02020" strokeWidth="1.500" />
              <path d="M12 12h14l-5 7v7l-4-2v-5z" fill="#e8c020" stroke="#806010" />
            </I>
          </div>
        </Ic>
        <div className="w-[6px] shrink-0">
          <Caret />
        </div>
        <Ic w="w-[24px]">
          <I s={18}>
            <path d="M24 4v10q0 6-6 6h-6" fill="none" stroke="#1a8aa8" strokeWidth="4" />
            <path d="M3 20l10-7v14z" fill="#18a870" />
          </I>
        </Ic>
        <Ic w="w-[24px]">
          <I s={20}>
            <path d="M2 13l14-8 10 5v8l-13 7-11-4z" fill="#8f8f8f" />
            <path d="M7 12l10-5" stroke="#b05a5a" />
          </I>
        </Ic>
        <Ic w="w-[23px]">
          <I s={20}>
            <circle cx="17" cy="18" r="5" fill="none" stroke="#b08888" strokeWidth="1.500" />
            <path d="M17 10v16M9 18h16" stroke="#a07070" />
            <path d="M4 10q3-7 9-5" fill="none" stroke="#777" strokeWidth="2" />
          </I>
        </Ic>
        <Ic w="w-[24px]">
          <I s={20}>
            <path d="M3 4l9 3 3 7-5-1-3-4z" fill="#777" />
            <rect x="17" y="12" width="7" height="13" fill="#a09888" />
          </I>
        </Ic>
        <Sep w="w-[4px]" />
        <Ic w="w-[24px]">
          <div className="w-[14px] h-[13px] border border-dashed border-[#777]" />
        </Ic>
        <div className="w-[12px] shrink-0">
          <Caret />
        </div>
        <Sep w="w-[4px]" />
        <Ic w="w-[24px]">
          <div className="w-[24px] h-[21px] rounded-[2px] border border-[#555] bg-white flex items-center justify-center">
            <I s={17}>
              <Box />
              <path d="M3 9l11-5 11 5v11M14 14V4" stroke="#e08080" fill="none" />
            </I>
          </div>
        </Ic>
        <div className="ml-auto w-[6px]">
          <div className="pt-[6px]">
            <Caret />
          </div>
        </div>
      </div>

      {/* status line */}
      <div className="h-[22px] shrink-0 flex items-center bg-[#dadada] border-b border-[#9e9e9e] font-bold">
        <div className="w-[681px] pl-[3px] pb-[2px] h-full flex items-center border-r border-[#f2f2f2]">指定参数</div>
        <div className="w-[681px] h-full border-r border-[#f2f2f2]" />
        <div className="w-[20px] h-full border-r border-[#f2f2f2]" />
        <div className="flex-1 flex justify-end pr-[3px]">
          <I s={16}>
            <path d="M2 8V2h6M20 2h6v6M26 20v6h-6M8 26H2v-6" fill="none" stroke="#444" strokeWidth="2" />
            <rect x="6" y="7" width="16" height="14" fill="#3a78d8" stroke="#445" />
          </I>
        </div>
      </div>

      {/* splitter */}
      <div className="h-[14px] shrink-0 bg-[#cfcfcf] pt-[4px] border-b border-[#777]">
        <div className="h-[6px] mx-[4px] rounded-[3px] bg-gradient-to-b from-[#a8a8a8] via-[#f4f4f4] to-[#dedede]" />
      </div>

      {/* main */}
      <div className="flex-1 min-h-0 flex">
        <div className="w-[33px] bg-[#a8a8a8] flex flex-col pt-[19px] shrink-0 border-r border-[#8c8c8c]">
          {tabs.map((t, n) => (
            <div
              key={n}
              className={`rounded-l-[4px] border border-r-0 border-[#777] flex items-center justify-start pl-[1px] overflow-hidden bg-gradient-to-b shrink-0 ${tabClass(n)}`}
            >
              {t}
            </div>
          ))}
        </div>
        <div className="w-[9px] bg-[#dcdcdc] shrink-0" />
        <div className="flex-1 min-w-0 bg-gradient-to-b from-[#b4b5b7] via-[#dcdddf] via-55% to-[#e9eaec]">
          <Scene />
        </div>
      </div>

      {/* bottom toolbar */}
      <div className="h-[35px] shrink-0 flex items-center bg-gradient-to-b from-[#ececec] to-[#d0d0d0] border-t border-[#bcbcbc] pl-[3px]">
        <Grip />
        <Ic>
          <I>
            <rect x="4" y="4" width="10" height="7" fill="#9a9a9a" />
            <rect x="10" y="9" width="10" height="7" fill="#a4a4a4" />
            <TreeMark />
          </I>
        </Ic>
        <Ic>
          <I>
            <path d="M5 12l9-8 3 2v8l-8 9-4-2z" fill="#8d8f98" />
            <TreeMark />
          </I>
        </Ic>
        <Ic>
          <I>
            <GrayBox />
            <TreeMark />
          </I>
        </Ic>
        <Ic>
          <I>
            <path d="M3 7l3 2 4-3 4 3 4-3 4 2v7H3z" fill="#a0a4a8" />
            <path d="M3 18h16" stroke="#888" />
            <TreeMark />
          </I>
        </Ic>
        <Cw w="w-[12px]" low />
        <Sep />
        <Grip />
        <Ic>
          <I>
            <path d="M3 18L10 4l10 6 4 10-10 6z" fill="#a8a078" />
            <path d="M3 18L10 4l3 16z" fill="#7f9a70" />
            <path d="M16 14l5 6-5 5" stroke="#b05050" fill="none" />
          </I>
        </Ic>
        <Cw w="w-[15px]" />
        <Ic w="w-[28px]">
          <I s={24}>
            <path d="M14 5v18M5 14h18" stroke="#8e8e8e" strokeWidth="1.500" />
          </I>
        </Ic>
        <Cw w="w-[15px]" />
        <Ic w="w-[28px]">
          <I>
            <path d="M4 26V5h14" fill="none" stroke="#778" strokeWidth="1.500" />
            <path d="M8 4q12 2 14 22" fill="none" stroke="#778" strokeWidth="1.500" />
            <circle cx="16" cy="20" r="4" fill="none" stroke="#667" strokeWidth="1.500" />
          </I>
        </Ic>
        <Cw w="w-[15px]" />
        <Ic w="w-[28px]">
          <I>
            <ellipse cx="14" cy="6" rx="6" ry="2" fill="#b89a80" stroke="#8a7058" />
            <path d="M8 6v12M20 6v12" stroke="#8a7058" />
            <path d="M2 20h20l4 5H6z" fill="#b0a280" />
            <circle cx="14" cy="20" r="2" fill="#888" />
          </I>
        </Ic>
        <Ic>
          <I>
            <path d="M6 5l12-3v18L6 24z" fill="#f0a830" stroke="#2a70c8" />
            <path d="M6 5l-3 1v20l3-2z" fill="#1f78e0" />
            <path d="M18 2l4 2v17l-4-1z" fill="#f8e080" stroke="#2a70c8" />
            <path d="M3 22h19v4H3z" fill="#1f68d8" />
            <rect x="22" y="23" width="4" height="4" fill="#eee" stroke="#333" />
          </I>
        </Ic>
        <Ic>
          <I>
            <GrayBox />
            <path d="M14 4L6 20M24 8L14 26" stroke="#b08878" />
            <path d="M13 8l9 4-9 10z" fill="#9a9a88" />
          </I>
        </Ic>
        <div className="w-[15px] -mt-[3px] shrink-0">
          <Caret />
        </div>
        <Cw w="w-[8px]" low />
        <Sep w="w-[6px]" />
      </div>

      {/* floating operation dialog */}
      <div className="absolute left-[42px] top-[166px] w-[297px] flex flex-col">
        <div className="h-[19px] flex items-stretch pl-[1px] shrink-0">
          <div className="w-[18px] bg-gradient-to-b from-[#f0f0f0] to-[#c0c0c0] border border-[#999] flex items-center justify-center">
            <svg width="10" height="12" viewBox="0 0 10 12">
              <path d="M8 1L3 6l5 5" fill="none" stroke="#555" strokeWidth="2.600" />
            </svg>
          </div>
          <div className="w-[18px] bg-[#161616] border-l border-[#888] flex items-center justify-center">
            <svg width="12" height="12" viewBox="0 0 12 12">
              <path d="M1 1l7 7" stroke="#fff" strokeWidth="2.400" />
              <path d="M10 4v6H4z" fill="#fff" />
            </svg>
          </div>
          <div className="w-[52px] bg-[#161616] border-l border-[#888] text-white font-bold text-center leading-[18px] whitespace-nowrap">
            型腔铣
          </div>
          <div className="w-[20px] bg-[#161616] border-l border-[#888] flex items-center justify-center">
            <div className="w-[10px] h-[2px] bg-white" />
          </div>
          <div className="w-[20px] bg-[#161616] border-l border-[#888] flex items-center justify-center">
            <svg width="12" height="12" viewBox="0 0 12 12" stroke="#fff" strokeWidth="3">
              <path d="M1 1l10 10M11 1L1 11" />
            </svg>
          </div>
          <div className="w-[18px] bg-gradient-to-b from-[#f0f0f0] to-[#c0c0c0] border border-[#999] flex items-center justify-center">
            <svg width="10" height="12" viewBox="0 0 10 12">
              <path d="M2 1l5 5-5 5" fill="none" stroke="#555" strokeWidth="2.600" />
            </svg>
          </div>
        </div>
        <div className="h-[648px] bg-[#e6e6e6] border-l border-r border-[#777] flex flex-col shrink-0">
          <div className="h-[612px] flex pl-[6px] pt-[8px] shrink-0">
            <div className="w-[268px] bg-[#cfcfcf] flex flex-col overflow-hidden">
              <Head t="刀具" up />
              <div className="h-[119px] shrink-0 flex flex-col">
                <Row h="h-[40px]">
                  <span className="ml-[8px] w-[90px] -mt-[8px]">刀具</span>
                  <div className="self-start mt-[7px]">
                    <Combo w="w-[93px]">
                      <span className="font-['DejaVu_Sans',sans-serif] text-[10px] tracking-[-.2px]">MILL10 (Milling</span>
                    </Combo>
                  </div>
                  <div className="flex gap-[4px] ml-[4px] self-start mt-[7px]">
                    <Btn>
                      <I s={24}>
                        <Spark x={6} y={6} />
                        <rect x="6" y="8" width="7" height="18" fill="#3a70c8" />
                        <path d="M6 12l7 3M6 17l7 3M6 22l7 3" stroke="#dde" />
                        <rect x="17" y="3" width="6" height="13" fill="#333" />
                        <rect x="15" y="14" width="8" height="8" fill="#e8b030" />
                      </I>
                    </Btn>
                    <Btn>
                      <I s={26}>
                        <path d="M3 14l10-8c2-4 8-4 10-1l-5 2 1 4 5-1c0 5-5 7-8 5l-5 5z" fill="#f0c820" stroke="#7a5c10" strokeWidth=".8" />
                        <path d="M9 21l7-7 8 7-6 5H9z" fill="#1f58c8" />
                        <path d="M3 9l6 5-4 4-4-4z" fill="#1f58c8" />
                      </I>
                    </Btn>
                  </div>
                </Row>
                <Sub t="输出" />
                <div className="h-[3px] shrink-0" />
                <Sub t="换刀设置" />
                <div className="h-[3px] shrink-0" />
                <Sub t="分析" />
              </div>
              <Head t="刀轴" />
              <div className="h-[2px] shrink-0" />
              <Head t="刀轨设置" up />
              <Row h="h-[41px]">
                <span className="ml-[8px] w-[90px] -mt-[7px]">方法</span>
                <div className="self-start mt-[7px]">
                  <Combo w="w-[93px]">
                    <span className="font-['DejaVu_Sans',sans-serif] text-[10px] tracking-[-.2px]">METHOD</span>
                  </Combo>
                </div>
                <div className="flex gap-[4px] ml-[4px] self-start mt-[7px]">
                  <Btn>
                    <I s={24}>
                      <Spark x={7} y={7} />
                      <path d="M3 12l4 2 5-3 5 3 4-3 4 2v13H3z" fill="#8fc8e8" stroke="#446" strokeWidth=".6" />
                      <path d="M3 20l3-3 3 3 3-3 3 3 3-3 3 3 3-3" stroke="#1a3a90" fill="none" />
                    </I>
                  </Btn>
                  <Btn dim>
                    <I s={26}>
                      <Wrench c="#a8a8a4" />
                    </I>
                  </Btn>
                </div>
              </Row>
              <Row h="h-[23px]">
                <span className="ml-[8px] w-[134px]">切削模式</span>
                <Combo w="w-[117px]" h="h-[23px]">
                  <svg width="22" height="20" viewBox="0 0 22 20" className="shrink-0">
                    <path d="M2 3h16" stroke="#555" strokeDasharray="1 1" strokeWidth="2" />
                    <path d="M5 16V6h9v10" fill="none" stroke="#1818d8" strokeWidth="1.500" />
                    <path d="M2 18h16" stroke="#e010e0" strokeDasharray="3 2" />
                  </svg>
                  <span className="-ml-[2px] -mt-[2px]">配置文件</span>
                </Combo>
              </Row>
              <div className="h-[5px] shrink-0" />
              <Row h="h-[19px]">
                <span className="ml-[8px] w-[134px]">步距</span>
                <Combo w="w-[117px]">
                  <span className="pl-[1px]">多个</span>
                </Combo>
              </Row>
              <div className="h-[3px] shrink-0" />
              <div className="h-[182px] mx-[8px] bg-[#c6c6c6] border-t border-l border-[#8e8e8e] border-b border-b-[#f0f0f0] flex flex-col shrink-0">
                <div className="h-[21px] flex items-center justify-between bg-[#b9b9b9] pl-[8px] pr-[2px] font-bold shrink-0">
                  <span className="-mt-[2px]">列表</span>
                  <Chev up />
                </div>
                <Row h="h-[24px]" a="items-end">
                  <span className="ml-[8px] w-[169px]">刀路数</span>
                  <Input w="w-[65px]" t="5" />
                </Row>
                <Row h="h-[21px]" a="items-end">
                  <span className="ml-[8px] w-[88px]">距离</span>
                  <Input w="w-[64px]" t="5. 00000" clip />
                  <div className="ml-[4px] -mb-[2px]">
                    <Combo w="w-[51px]">
                      <span className="font-['DejaVu_Sans',sans-serif] text-[10.500px] pl-[1px] pt-[2px]">mm</span>
                    </Combo>
                  </div>
                </Row>
                <div className="flex mt-[6px] ml-[8px] gap-[4px]">
                  <div className="w-[207px] h-[98px] border border-[#666] bg-white flex flex-col font-['DejaVu_Sans',sans-serif] text-[10.500px] tracking-[.4px] shrink-0">
                    <div className="h-[16px] flex bg-gradient-to-b from-[#f4f4f4] to-[#dcdcdc] text-[#222] shrink-0">
                      <div className="w-[100px] pl-[7px] border-r border-[#aaa] leading-[15px]">Passes</div>
                      <div className="w-[102px] pl-[6px] border-r border-[#aaa] leading-[15px]">Distance</div>
                    </div>
                    <div className="h-[19px] flex bg-[#37658f] text-white border-y border-dotted border-[#e8a050] shrink-0">
                      <div className="w-[100px] pl-[3px] border-r border-[#eee] leading-[17px]">5</div>
                      <div className="w-[102px] pl-[4px] leading-[17px]">5.000000</div>
                    </div>
                    <div className="h-[20px] flex border-b border-[#e6e6e6] shrink-0">
                      <div className="w-[100px] border-r border-[#e6e6e6]" />
                      <div className="w-[102px] border-r border-[#e6e6e6]" />
                    </div>
                    <div className="h-[20px] flex border-b border-[#e6e6e6] shrink-0">
                      <div className="w-[100px] border-r border-[#e6e6e6]" />
                      <div className="w-[102px] border-r border-[#e6e6e6]" />
                    </div>
                    <div className="h-[6px] flex shrink-0">
                      <div className="w-[100px] border-r border-[#e6e6e6]" />
                      <div className="w-[102px] border-r border-[#e6e6e6]" />
                    </div>
                    <div className="flex-1 flex items-center bg-[#d4d4d4] px-[5px] gap-[3px]">
                      <svg width="5" height="8" viewBox="0 0 5 8">
                        <path d="M4 1L1 4l3 3" fill="none" stroke="#333" />
                      </svg>
                      <div className="flex-1 flex items-center h-full">
                        <div className="w-[112px] h-[12px] rounded-[3px] border border-[#888] bg-gradient-to-b from-white to-[#dcdcdc] shrink-0" />
                        <div className="flex-1 h-[3px] bg-[#444] rounded-r-[2px]" />
                      </div>
                      <svg width="5" height="8" viewBox="0 0 5 8">
                        <path d="M1 1l3 3-3 3" fill="none" stroke="#333" />
                      </svg>
                    </div>
                  </div>
                  <div className="flex flex-col gap-[4px]">
                    <Btn s="w-[22px] h-[22px]">
                      <svg width="18" height="18" viewBox="0 0 18 18" fill="none" stroke="#111">
                        <path d="M1 4h6M4 1v6" stroke="#d81818" strokeWidth="2" />
                        <circle cx="11" cy="11" r="3.500" stroke="#c01010" />
                        <path d="M11 5v12M5 11h12" strokeWidth="1.300" />
                      </svg>
                    </Btn>
                    <Btn s="w-[22px] h-[22px]">
                      <svg width="16" height="16" viewBox="0 0 16 16" stroke="#222" strokeWidth="2.800">
                        <path d="M2 2l12 12M14 2L2 14" />
                      </svg>
                    </Btn>
                    <Btn s="w-[22px] h-[22px]" dim>
                      <svg width="14" height="14" viewBox="0 0 14 14">
                        <path d="M7 1l6 6H9v6H5V7H1z" fill="#8a9596" />
                      </svg>
                    </Btn>
                    <Btn s="w-[22px] h-[22px]" dim>
                      <svg width="14" height="14" viewBox="0 0 14 14">
                        <path d="M7 13l6-6H9V1H5v6H1z" fill="#8a9596" />
                      </svg>
                    </Btn>
                  </div>
                </div>
              </div>
              <Row h="h-[21px]" a="items-end">
                <span className="ml-[8px] w-[187px]">附加刀路</span>
                <Input w="w-[64px]" t="0" />
              </Row>
              <Row h="h-[21px]" a="items-end">
                <span className="ml-[8px] w-[187px]">全局每刀深度</span>
                <Input w="w-[64px]" t="50. 00000" clip />
              </Row>
              <Row h="h-[34px]" a="items-end">
                <span className="ml-[8px] w-[221px] mb-[7px]">切削层</span>
                <Btn>
                  <svg width="24" height="24" viewBox="0 0 24 24">
                    <path d="M2 4h15M2 8h13M2 12h11M2 16h9M2 20h13" stroke="#111" strokeWidth="2" />
                    <path d="M19 1l-4 11h3l-4 8 8-11h-3l3-8z" fill="#e8d020" stroke="#807010" strokeWidth=".6" />
                  </svg>
                </Btn>
              </Row>
              <Row h="h-[34px]" a="items-end">
                <span className="ml-[8px] w-[221px] mb-[7px]">切削参数</span>
                <Btn>
                  <svg width="24" height="24" viewBox="0 0 24 24">
                    <path d="M3 11h15" stroke="#1a1a80" strokeWidth="1.400" />
                    <path d="M17 8l5 3-5 3z" fill="#1a1a80" />
                    <rect x="1.500" y="15.500" width="21" height="6" fill="#fff" stroke="#1a1a80" />
                    <path d="M3 21l5-5M8 21l5-5M13 21l5-5M18 21l4-5" stroke="#334" />
                  </svg>
                </Btn>
              </Row>
              <Row h="h-[34px]" a="items-end">
                <span className="ml-[8px] w-[221px] mb-[7px]">非切削移动</span>
                <Btn>
                  <svg width="24" height="24" viewBox="0 0 24 24">
                    <path d="M3 12V5h18v7" fill="none" stroke="#d01818" strokeWidth="1.400" />
                    <path d="M1 9l2 4 2-4zM19 6l2-4 2 4zM7 3L3 5l4 2z" fill="#d01818" />
                    <rect x="2" y="14" width="20" height="9" fill="#fff" stroke="#111" />
                    <path d="M4 23l8-9M10 23l8-9M16 23l6-7" stroke="#223" />
                  </svg>
                </Btn>
              </Row>
            </div>
            <div className="w-[14px] flex flex-col items-center relative shrink-0">
              <svg width="8" height="6" viewBox="0 0 8 6" className="mt-[2px]">
                <path d="M1 5l3-3 3 3" fill="none" stroke="#333" />
              </svg>
              <div className="w-[3px] flex-1 bg-[#555] rounded-[2px] my-[3px]" />
              <svg width="8" height="6" viewBox="0 0 8 6" className="mb-[2px]">
                <path d="M1 1l3 3 3-3" fill="none" stroke="#333" />
              </svg>
              <div className="absolute left-[1px] top-[150px] w-[13px] h-[334px] rounded-[3px] border border-[#7d8b96] bg-gradient-to-r from-[#f8f8f8] to-[#e8e8e8]" />
            </div>
          </div>
          <div className="mx-[6px] border-t border-[#fafafa] shadow-[0_-1px_0_#b0b0b0] shrink-0" />
          <div className="flex justify-end gap-[8px] pt-[5px] pr-[16px]">
            <div className="w-[52px] h-[19px] rounded-[3px] border border-[#4f8a4f] bg-gradient-to-b from-[#d4f4c4] via-[#7fdc6c] to-[#a8ec94] text-center leading-[17px] shadow-[inset_0_0_0_1px_#e4f8dc]">
              确定
            </div>
            <div className="w-[52px] h-[19px] rounded-[3px] border border-[#666] bg-gradient-to-b from-[#f6f6f6] to-[#cfcfcf] text-center leading-[17px]">
              取消
            </div>
          </div>
        </div>
        <div className="h-[10px] bg-gradient-to-b from-[#444] to-[#0a0a0a] rounded-b-[4px] shrink-0" />
      </div>
    </div>
  );
}
